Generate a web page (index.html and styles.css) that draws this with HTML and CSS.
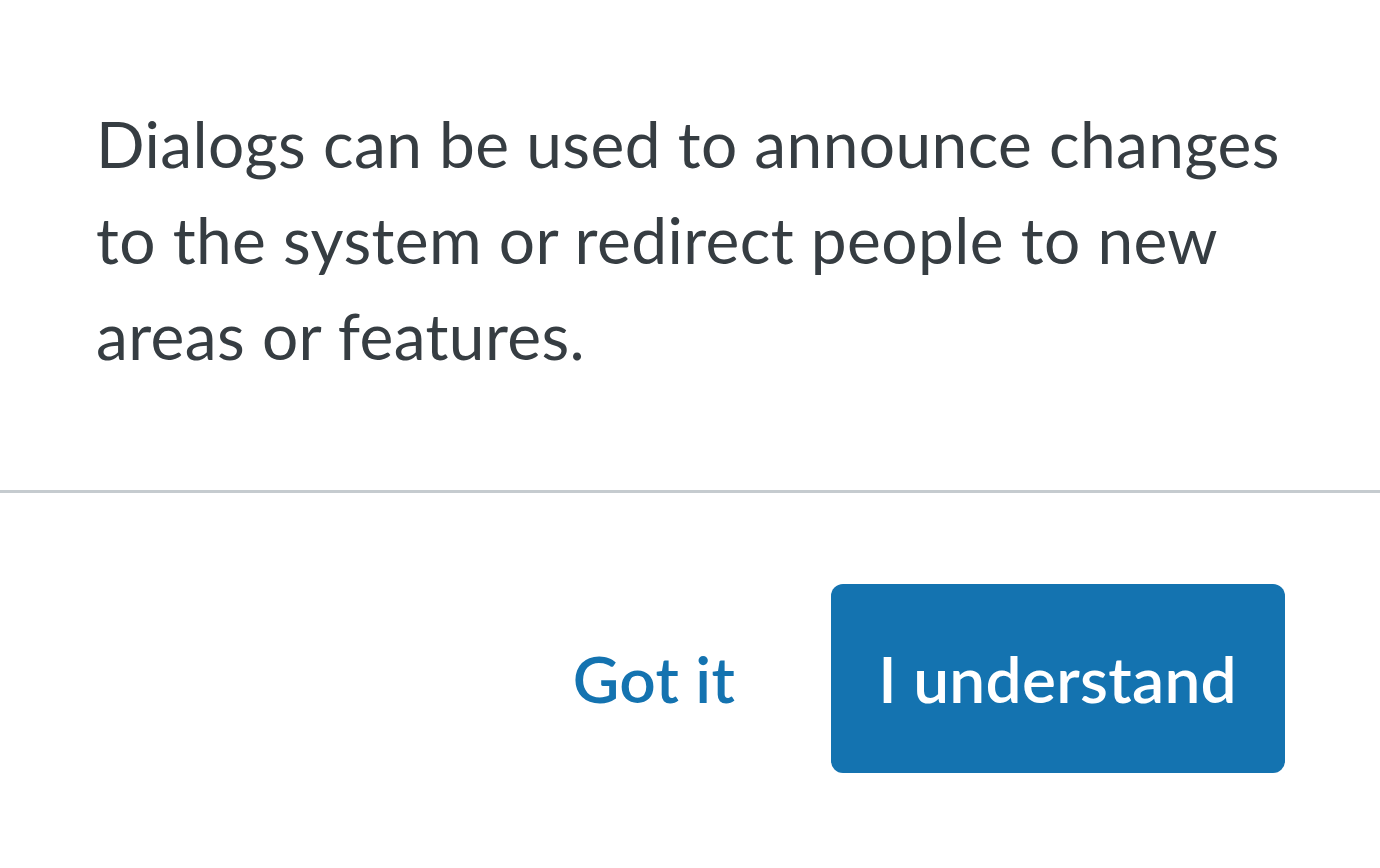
FILE: index.html
```html
<!DOCTYPE html>
<html lang="en">
<head>
<meta charset="utf-8">
<title>Dialog</title>
<link rel="stylesheet" href="styles.css">
</head>
<body>
<div class="dialog">
  <div class="dialog-body">
    <p class="dialog-text">Dialogs can be used to announce changes to the system or redirect people to new areas or features.</p>
  </div>
  <div class="dialog-footer">
    <button class="btn btn-text" type="button">Got it</button>
    <button class="btn btn-primary" type="button">I understand</button>
  </div>
</div>
</body>
</html>
```
FILE: styles.css
```css
html, body {
  margin: 0;
  padding: 0;
  background: #ffffff;
}
body {
  font-family: "Lato", "Noto Sans", sans-serif;
  color: #363d42;
}
.dialog {
  width: 1380px;
  height: 868px;
  display: flex;
  flex-direction: column;
}
.dialog-body {
  flex: none;
  padding: 96px 96px 0 96px;
  height: 493px;
  box-sizing: border-box;
  border-bottom: 3px solid #c5cbcf;
}
.dialog-text {
  margin: 0;
  font-size: 64px;
  line-height: 96px;
  letter-spacing: 0.4px;
  width: 1200px;
}
.dialog-footer {
  flex: 1;
  display: flex;
  justify-content: flex-end;
  align-items: center;
  gap: 48px;
  padding: 0 95px 4px 96px;
}
.btn {
  font-family: "Lato", "Noto Sans", sans-serif;
  font-size: 64px;
  font-weight: 600;
  letter-spacing: 0.3px;
  border: none;
  border-radius: 12px;
  height: 189px;
  padding: 0 48px 0 47px;
  cursor: pointer;
}
.btn-text {
  background: transparent;
  color: #1473b0;
}
.btn-primary {
  background: #1473b0;
  color: #ffffff;
}
```
